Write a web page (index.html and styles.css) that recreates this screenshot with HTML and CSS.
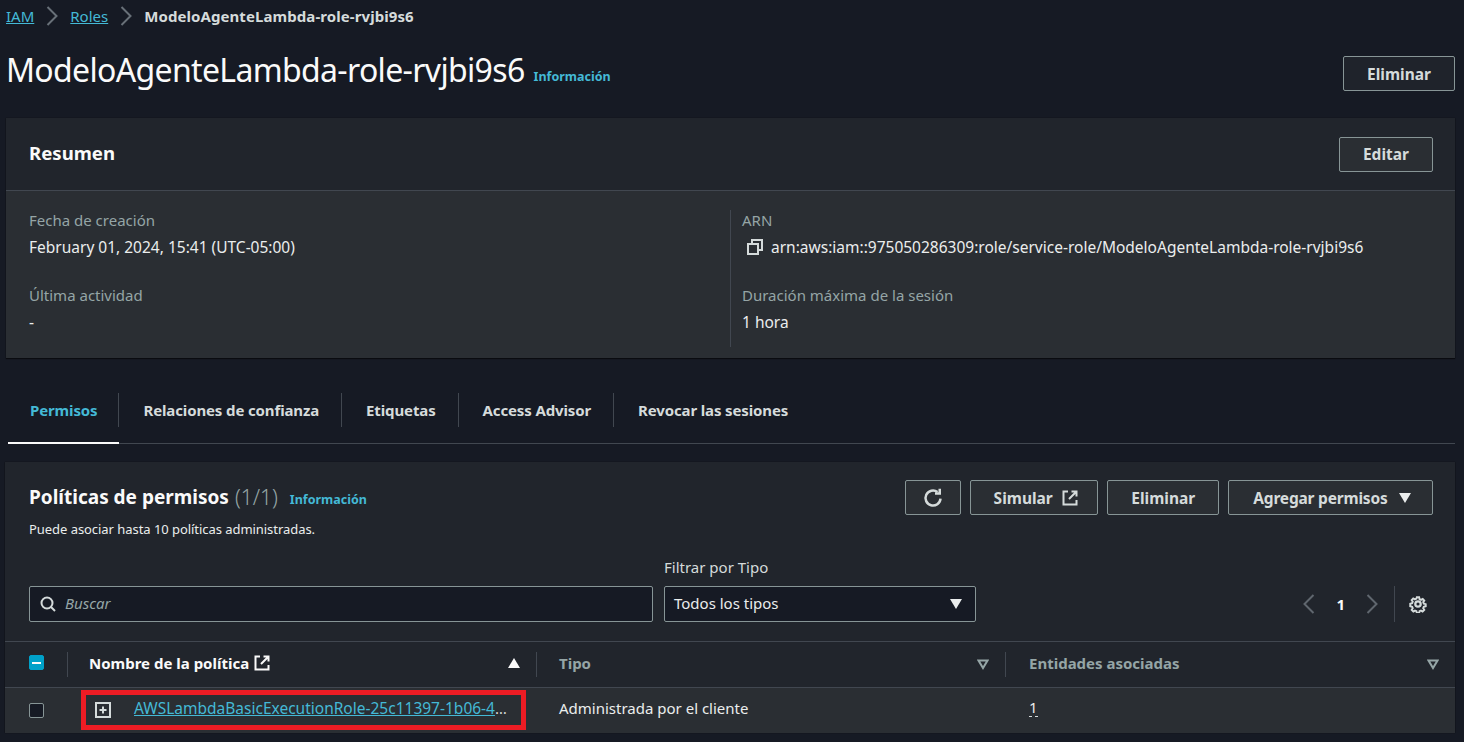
FILE: index.html
```html
<!DOCTYPE html>
<html lang="es">
<head>
    <meta charset="UTF-8">
    <title>ModeloAgenteLambda-role-rvjbi9s6</title>
    <link rel="stylesheet" href="styles.css">
</head>
<body>
    <nav class="breadcrumbs">
        <a href="#">IAM</a>
        <svg class="crumb-sep" width="12" height="20" viewBox="0 0 12 20"><path d="M1.5 1l9 9-9 9"/></svg>
        <a href="#">Roles</a>
        <svg class="crumb-sep" width="12" height="20" viewBox="0 0 12 20"><path d="M1.5 1l9 9-9 9"/></svg>
        <span class="crumb-current">ModeloAgenteLambda-role-rvjbi9s6</span>
    </nav>

    <header class="page-head">
        <h1>ModeloAgenteLambda-role-rvjbi9s6</h1>
        <a class="info-link" href="#">Información</a>
        <button class="btn btn-delete">Eliminar</button>
    </header>

    <section class="card summary">
        <div class="summary-head">
            <h2>Resumen</h2>
            <button class="btn">Editar</button>
        </div>
        <div class="summary-body">
            <div class="summary-col">
                <div class="field">
                    <div class="field-label">Fecha de creación</div>
                    <div class="field-value">February 01, 2024, 15:41 (UTC-05:00)</div>
                </div>
                <div class="field">
                    <div class="field-label">Última actividad</div>
                    <div class="field-value">-</div>
                </div>
            </div>
            <div class="summary-col summary-col-right">
                <div class="field">
                    <div class="field-label">ARN</div>
                    <div class="field-value arn">
                        <svg class="icon" width="16" height="16" viewBox="0 0 16 16"><path d="M1 5h10v10H1z"/><path d="M5 5V1h10v10h-4"/></svg>
                        arn:aws:iam::975050286309:role/service-role/ModeloAgenteLambda-role-rvjbi9s6
                    </div>
                </div>
                <div class="field">
                    <div class="field-label">Duración máxima de la sesión</div>
                    <div class="field-value">1 hora</div>
                </div>
            </div>
        </div>
    </section>

    <div class="tabs">
        <a class="tab tab-active" href="#">Permisos</a>
        <a class="tab" href="#">Relaciones de confianza</a>
        <a class="tab" href="#">Etiquetas</a>
        <a class="tab" href="#">Access Advisor</a>
        <a class="tab" href="#">Revocar las sesiones</a>
    </div>

    <section class="card policies">
        <div class="policies-top">
            <div class="policies-title">
                <div class="title-line">
                    <h2>Políticas de permisos</h2>
                    <span class="count">(1/1)</span>
                    <a class="info-link" href="#">Información</a>
                </div>
                <p class="hint">Puede asociar hasta 10 políticas administradas.</p>
            </div>
            <div class="actions">
                <button class="btn btn-icon">
                    <svg class="icon" width="20" height="20" viewBox="0 0 16 16"><path d="M14 8.5A6 6 0 1 1 11.6 3.2"/><path d="M13.4 0.6v3.8H9.6"/></svg>
                </button>
                <button class="btn btn-simulate">Simular
                    <svg class="icon" width="16" height="16" viewBox="0 0 16 16"><path d="M6 1.5H1.5v13h13V10"/><path d="M9.5 1.5h5v5M14.5 1.5L7 9"/></svg>
                </button>
                <button class="btn">Eliminar</button>
                <button class="btn btn-menu">Agregar permisos <span class="caret"></span></button>
            </div>
        </div>

        <div class="filters">
            <div class="search">
                <svg class="icon" width="16" height="16" viewBox="0 0 16 16"><circle cx="7" cy="7" r="5.5"/><path d="M11 11l4 4"/></svg>
                <span>Buscar</span>
            </div>
            <div class="type-filter">
                <label>Filtrar por Tipo</label>
                <div class="select">Todos los tipos <span class="caret"></span></div>
            </div>
            <div class="pager">
                <svg class="pager-arrow" width="12" height="20" viewBox="0 0 12 20"><path d="M10.5 1l-9 9 9 9"/></svg>
                <span class="page-num">1</span>
                <svg class="pager-arrow" width="12" height="20" viewBox="0 0 12 20"><path d="M1.5 1l9 9-9 9"/></svg>
                <div class="pager-sep">
                    <svg class="icon" width="18" height="18" viewBox="0 0 16 16"><circle cx="8" cy="8" r="2.4"/><path d="M6.8 1h2.4l.4 2 1.5.7 1.8-1 1.6 1.8-1.1 1.6.6 1.6 2 .5v2.2l-2 .5-.6 1.5 1.1 1.7-1.7 1.7-1.7-1-1.5.6-.4 2H6.8l-.4-2-1.5-.6-1.7 1-1.7-1.7 1.1-1.7-.6-1.5-2-.5V7.7l2-.5.6-1.6-1.1-1.6 1.6-1.8 1.8 1 1.5-.7z" transform="translate(1.1 1.1) scale(.86)"/></svg>
                </div>
            </div>
        </div>

        <div class="table">
            <div class="thead">
                <div class="cell cell-check"><span class="checkbox checkbox-mixed"></span></div>
                <div class="cell cell-name th th-active">
                    <span>Nombre de la política</span>
                    <svg class="icon" width="16" height="16" viewBox="0 0 16 16"><path d="M6 1.5H1.5v13h13V10"/><path d="M9.5 1.5h5v5M14.5 1.5L7 9"/></svg>
                    <span class="sort-up"></span>
                </div>
                <div class="cell cell-type th">
                    <span>Tipo</span>
                    <svg class="sort-down" width="12" height="12" viewBox="0 0 12 12"><path d="M1.5 2.5h9L6 10z"/></svg>
                </div>
                <div class="cell cell-ent th">
                    <span>Entidades asociadas</span>
                    <svg class="sort-down" width="12" height="12" viewBox="0 0 12 12"><path d="M1.5 2.5h9L6 10z"/></svg>
                </div>
            </div>
            <div class="trow">
                <div class="cell cell-check"><span class="checkbox"></span></div>
                <div class="cell cell-name">
                    <div class="highlight">
                        <svg class="icon expand" width="16" height="16" viewBox="0 0 16 16"><path d="M1 1h14v14H1z"/><path d="M8 4.5v7M4.5 8h7"/></svg>
                        <a class="policy-link" href="#">AWSLambdaBasicExecutionRole-25c11397-1b06-4</a><span class="more">…</span>
                    </div>
                </div>
                <div class="cell cell-type">Administrada por el cliente</div>
                <div class="cell cell-ent"><span class="dashed">1</span></div>
            </div>
        </div>
    </section>
</body>
</html>
```

FILE: styles.css
```css
* {
    box-sizing: border-box;
}

body {
    margin: 0;
    padding: 0 9px 0 6px;
    height: 742px;
    overflow: hidden;
    background-color: #161a24;
    color: #d5dbdb;
    font-family: 'Noto Sans', sans-serif;
    font-size: 15px;
    line-height: 20px;
}

a {
    color: #44b9d6;
}

h1, h2, p {
    margin: 0;
}

.icon {
    fill: none;
    stroke: #d5dbdb;
    stroke-width: 2;
    flex: none;
}

.breadcrumbs {
    display: flex;
    align-items: center;
    gap: 12px;
    height: 32px;
}

.crumb-sep {
    fill: none;
    stroke: #687078;
    stroke-width: 2;
}

.crumb-current {
    font-weight: 700;
    letter-spacing: 0.08px;
}

.page-head {
    display: flex;
    align-items: center;
    height: 86px;
    padding-bottom: 3px;
}

.page-head h1 {
    font-size: 32px;
    font-weight: 400;
    line-height: 40px;
    color: #fafafa;
    letter-spacing: -0.66px;
    margin-top: -7px;
}

.info-link {
    font-size: 12.5px;
    font-weight: 700;
    text-decoration: none;
    margin-left: 9px;
}

.page-head .info-link {
    margin-top: 7px;
}

.btn {
    display: inline-flex;
    align-items: center;
    justify-content: center;
    gap: 9px;
    height: 35px;
    padding: 0 23px;
    background-color: #2a2e33;
    border: 1px solid #879596;
    border-radius: 2px;
    color: #d5dbdb;
    font-family: inherit;
    font-size: 15.5px;
    font-weight: 700;
    white-space: nowrap;
}

.btn-delete {
    margin-left: auto;
    background-color: #1f232b;
}

.card {
    background-color: #21252c;
    box-shadow: 0 1px 1px rgba(0, 0, 0, 0.5), 0 0 1px rgba(0, 0, 0, 0.5);
}

.summary-head {
    display: flex;
    align-items: center;
    justify-content: space-between;
    height: 73px;
    padding: 0 22px 0 23px;
    border-bottom: 1px solid #414750;
}

.summary-head h2 {
    font-size: 18.6px;
    font-weight: 700;
    color: #fafafa;
    margin-top: -3px;
}

.summary-body {
    display: flex;
    height: 167px;
    padding-top: 19px;
    background-color: #2a2e33;
}

.summary-col {
    width: 724px;
    padding-left: 23px;
}

.summary-col-right {
    flex: 1;
    padding-left: 11px;
    height: 137px;
    border-left: 1px solid #414750;
}

.field {
    height: 75px;
}

.field-label {
    color: #95a5a6;
}

.field-value {
    margin-top: 7px;
    color: #eaeded;
    font-size: 15.5px;
}

.arn {
    display: flex;
    align-items: center;
    gap: 8px;
    padding-left: 5px;
}

.tabs {
    display: flex;
    align-items: center;
    height: 68px;
    margin: 18px 0 18px 2px;
    border-bottom: 1px solid #414750;
}

.tab {
    display: flex;
    align-items: center;
    height: 34px;
    padding: 0 22px 0 24px;
    border-right: 1px solid #414750;
    color: #d5dbdb;
    font-weight: 700;
    text-decoration: none;
    letter-spacing: -0.13px;
}

.tab:first-child {
    padding: 0 21px 0 22px;
}

.tab:last-child {
    border-right: none;
}

.tab-active {
    position: relative;
    color: #44b9d6;
}

.tab-active::after {
    content: '';
    position: absolute;
    left: 0;
    right: -1px;
    bottom: -17px;
    height: 2px;
    background-color: #fafafa;
}

.policies {
    height: 270px;
    margin-left: -1px;
}

.policies-top {
    display: flex;
    justify-content: space-between;
    padding: 16px 22px 0 24px;
    height: 86px;
}

.title-line {
    display: flex;
    align-items: center;
    height: 38px;
}

.title-line h2 {
    font-size: 19px;
    font-weight: 700;
    color: #fafafa;
}

.title-line .info-link {
    margin-left: 12px;
    margin-top: 5px;
}

.count {
    font-size: 21px;
    font-weight: 300;
    color: #95a5a6;
    margin-left: 6px;
}

.hint {
    font-size: 13px;
    line-height: 16px;
    color: #eaeded;
    margin-top: 5px;
    letter-spacing: -0.05px;
}

.actions {
    display: flex;
    gap: 9px;
    margin-top: 2px;
}

.btn-icon {
    width: 56px;
    padding: 0;
}

.btn-simulate {
    padding: 0 19.5px 0 23px;
}

.btn-menu {
    gap: 11px;
    padding: 0 21.5px 0 24px;
    letter-spacing: -0.2px;
}

.caret {
    display: inline-block;
    width: 0;
    height: 0;
    border-left: 6.5px solid transparent;
    border-right: 6.5px solid transparent;
    border-top: 10px solid #eaeded;
}

.filters {
    display: flex;
    align-items: flex-end;
    height: 93px;
    padding: 0 28px 19px 24px;
}

.search {
    display: flex;
    align-items: center;
    gap: 9px;
    width: 624px;
    height: 36px;
    padding: 0 0 2px 10px;
    background-color: #161a24;
    border: 1px solid #879596;
    border-radius: 2px;
    color: #95a5a6;
    font-style: italic;
}

.search .icon {
    margin-top: 2px;
}

.type-filter {
    width: 312px;
    margin-left: 11px;
}

.type-filter label {
    display: block;
    margin-bottom: 9px;
    color: #d5dbdb;
}

.select {
    display: flex;
    align-items: center;
    justify-content: space-between;
    height: 36px;
    padding: 0 13px 2px 9px;
    background-color: #161a24;
    border: 1px solid #879596;
    border-radius: 2px;
    color: #eaeded;
}

.select .caret {
    margin-top: 2px;
}

.pager {
    display: flex;
    align-items: center;
    height: 36px;
    margin-left: auto;
    gap: 21px;
}

.pager-arrow {
    fill: none;
    stroke: #5f666e;
    stroke-width: 2;
}

.page-num {
    font-weight: 700;
    color: #fafafa;
}

.pager-sep {
    display: flex;
    align-items: center;
    height: 36px;
    padding-left: 14px;
    margin-left: -5px;
    border-left: 1px solid #414750;
}

.thead, .trow {
    display: flex;
    height: 46px;
    border-top: 1px solid #414750;
}

.trow {
    background-color: #2a2e33;
}

.cell {
    display: flex;
    align-items: center;
    padding-bottom: 4px;
    color: #eaeded;
}

.cell-check {
    width: 62px;
    padding-left: 24px;
}

.cell-name {
    width: 469px;
}

.cell-type {
    width: 469px;
    padding-left: 23px;
}

.cell-ent {
    flex: 1;
    padding-left: 24px;
}

.trow .cell-type, .trow .cell-ent {
    padding-bottom: 6px;
}

.th {
    position: relative;
    font-weight: 700;
    color: #95a5a6;
    gap: 5px;
}

.th::before {
    content: '';
    position: absolute;
    left: 0;
    top: 10px;
    height: 25px;
    border-left: 1px solid #414750;
}

.cell-name.th {
    padding-left: 22px;
    padding-right: 16px;
}

.th-active {
    color: #fafafa;
}

.th-active .icon {
    stroke: #fafafa;
}

.sort-up {
    width: 0;
    height: 0;
    margin-left: auto;
    border-left: 6.5px solid transparent;
    border-right: 6.5px solid transparent;
    border-bottom: 10px solid #fafafa;
}

.sort-down {
    margin-left: auto;
    margin-right: 16px;
    margin-top: 2px;
    fill: none;
    stroke: #95a5a6;
    stroke-width: 2;
}

.checkbox {
    display: block;
    width: 15px;
    height: 15px;
    background-color: #161a24;
    border: 1px solid #879596;
    border-radius: 2px;
}

.trow .cell-check {
    padding-bottom: 1px;
}

.checkbox-mixed {
    position: relative;
    background-color: #00a1c9;
    border-color: #00a1c9;
}

.checkbox-mixed::after {
    content: '';
    position: absolute;
    left: 2px;
    right: 2px;
    top: 5.5px;
    height: 2px;
    background-color: #fafafa;
}

.highlight {
    display: flex;
    align-items: center;
    width: 445px;
    height: 40px;
    margin-left: 14px;
    margin-top: 2px;
    padding-left: 9px;
    border: 5px solid #ed1c24;
}

.expand {
    margin-right: 23px;
}

.policy-link {
    white-space: nowrap;
    font-size: 15.5px;
    margin-top: -3px;
}

.more {
    color: #d5dbdb;
    margin-top: -3px;
}

.dashed {
    border-bottom: 1px dashed #d5dbdb;
    line-height: 18px;
}
```
